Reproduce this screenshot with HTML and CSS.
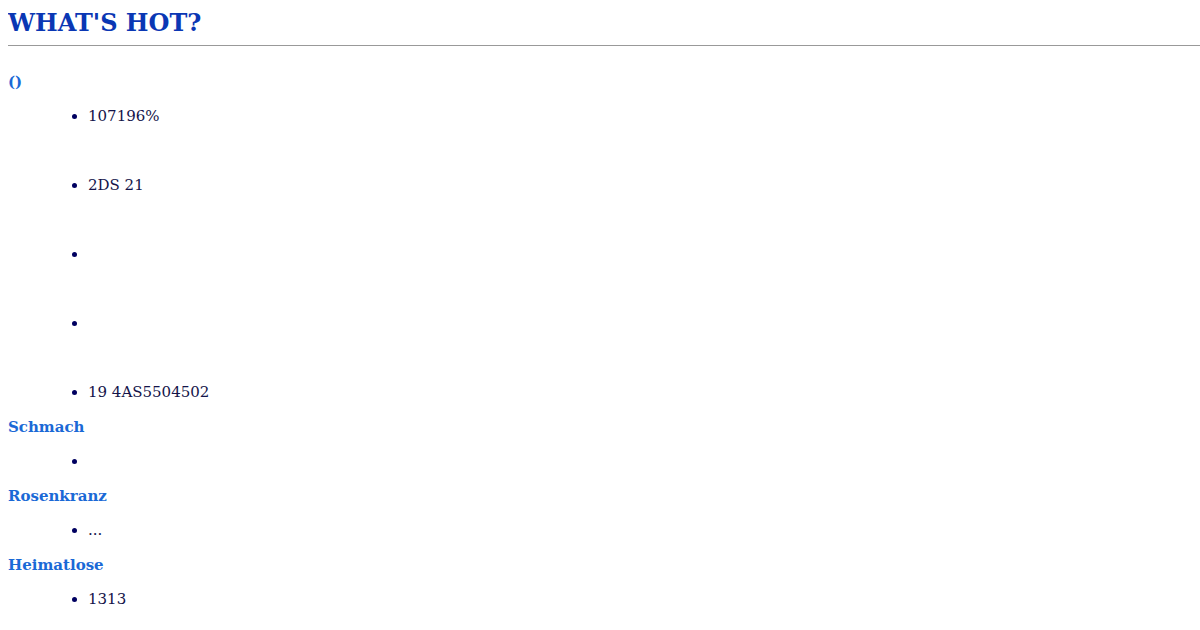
FILE: index.html
```html
<!DOCTYPE html>
<html>
<head>
<meta charset="utf-8">
<link rel="stylesheet" href="styles.css">
</head>
<body>
<h1 class="title">WHAT'S HOT?</h1>
<div class="rule"></div>
<div class="sections">
  <h3 class="sec">()</h3>
  <ul class="list spaced">
    <li>107196%</li>
    <li>2DS 21</li>
    <li></li>
    <li></li>
    <li>19 4AS5504502</li>
  </ul>
  <h3 class="sec">Schmach</h3>
  <ul class="list">
    <li></li>
  </ul>
  <h3 class="sec">Rosenkranz</h3>
  <ul class="list">
    <li>...</li>
  </ul>
  <h3 class="sec">Heimatlose</h3>
  <ul class="list">
    <li>1313</li>
  </ul>
</div>
</body>
</html>
```

FILE: styles.css
```css
html {
  background: #ffffff;
  overflow: hidden;
}
body {
  margin: 8px 0 8px 8px;
  font-family: "DejaVu Serif", serif;
}
.title {
  margin: 0;
  font-size: 24px;
  line-height: 30px;
  font-weight: bold;
  color: #0a37b4;
}
.rule {
  height: 1px;
  background: #999999;
  margin-top: 7px;
}
.sections {
  padding-top: 18.5px;
}
.sec {
  margin: 0;
  font-size: 15px;
  line-height: 34.5px;
  font-weight: bold;
  color: #1a69d6;
}
.list {
  margin: 0;
  padding-left: 80px;
  font-size: 15px;
  line-height: 34.5px;
  color: #14144a;
  list-style: disc;
}
.list li {
  min-height: 34.5px;
}
.list li::marker {
  color: #000060;
}
.spaced li + li {
  margin-top: 34.5px;
}
```
